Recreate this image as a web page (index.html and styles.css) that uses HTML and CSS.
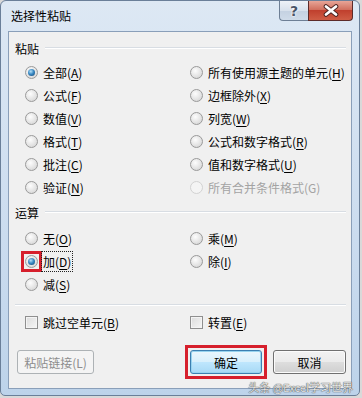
FILE: index.html
```html
<!DOCTYPE html>
<html lang="zh-CN">
<head>
    <meta charset="UTF-8">
    <title>选择性粘贴</title>
    <link rel="stylesheet" href="styles.css">
</head>
<body>
    <div class="window">
        <div class="titlebar">
            <span class="title">选择性粘贴</span>
            <div class="caption">
                <div class="cap help">?</div>
                <div class="cap close">
                    <svg width="18" height="13" viewBox="0 0 18 13">
                        <path d="M4 2.5 L14 10.5 M14 2.5 L4 10.5" stroke="#4a2320" stroke-width="4.6" stroke-linecap="round"/>
                        <path d="M4 2.5 L14 10.5 M14 2.5 L4 10.5" stroke="#fff" stroke-width="2.8" stroke-linecap="round"/>
                    </svg>
                </div>
            </div>
        </div>

        <div class="client">
            <div class="group-head">粘贴</div>
            <div class="options">
                <div class="opt"><span class="radio on"></span>全部(<u>A</u>)</div>
                <div class="opt"><span class="radio"></span>所有使用源主题的单元(<u>H</u>)</div>
                <div class="opt"><span class="radio"></span>公式(<u>F</u>)</div>
                <div class="opt"><span class="radio"></span>边框除外(<u>X</u>)</div>
                <div class="opt"><span class="radio"></span>数值(<u>V</u>)</div>
                <div class="opt"><span class="radio"></span>列宽(<u>W</u>)</div>
                <div class="opt"><span class="radio"></span>格式(<u>T</u>)</div>
                <div class="opt"><span class="radio"></span>公式和数字格式(<u>R</u>)</div>
                <div class="opt"><span class="radio"></span>批注(<u>C</u>)</div>
                <div class="opt"><span class="radio"></span>值和数字格式(<u>U</u>)</div>
                <div class="opt"><span class="radio"></span>验证(<u>N</u>)</div>
                <div class="opt disabled"><span class="radio"></span>所有合并条件格式(G)</div>
            </div>

            <div class="group-head ops-head">运算</div>
            <div class="options ops">
                <div class="opt"><span class="radio"></span>无(<u>O</u>)</div>
                <div class="opt"><span class="radio"></span>乘(<u>M</u>)</div>
                <div class="opt"><span class="mark"><span class="radio on"></span></span><span class="focus">加(<u>D</u>)</span></div>
                <div class="opt"><span class="radio"></span>除(<u>I</u>)</div>
                <div class="opt"><span class="radio"></span>减(<u>S</u>)</div>
            </div>

            <div class="separator"></div>

            <div class="options checks">
                <div class="opt"><span class="check"></span>跳过空单元(<u>B</u>)</div>
                <div class="opt"><span class="check"></span>转置(<u>E</u>)</div>
            </div>

            <div class="buttons">
                <button class="btn link" disabled>粘贴链接(L)</button>
                <div class="right-buttons">
                    <div class="mark-btn"><button class="btn default">确定</button></div>
                    <button class="btn">取消</button>
                </div>
            </div>
        </div>

        <div class="watermark">头条 @Excel学习世界</div>
    </div>
</body>
</html>
```

FILE: styles.css
```css
body {
    margin: 0;
    background: #d9d9d9;
    font-family: "Noto Sans CJK SC", "Noto Sans", sans-serif;
    font-size: 12px;
    color: #000;
}
.window {
    position: relative;
    width: 360px;
    height: 396px;
    border: 1px solid #6a7f99;
    border-radius: 6px 6px 5px 5px;
    background: linear-gradient(#dde8f4, #cbdcef 60%, #bdd3ea);
    box-sizing: border-box;
    padding: 0 7px 7px 7px;
}
.titlebar {
    height: 30px;
    display: flex;
    justify-content: space-between;
    align-items: flex-start;
}
.title {
    margin-top: 7px;
    margin-left: 3px;
    line-height: 16px;
}
.caption {
    display: flex;
    margin-right: -1px;
}
.cap {
    height: 20px;
    box-sizing: border-box;
    display: flex;
    align-items: center;
    justify-content: center;
}
.help {
    width: 29px;
    border: 1px solid #6e7f95;
    border-top: none;
    border-right: none;
    border-radius: 0 0 0 4px;
    background: linear-gradient(#eef2f7, #d8e1ec 50%, #c4d1e1 51%, #cfdbe9);
    color: #4a5568;
    font-weight: bold;
    font-size: 14px;
    font-family: "DejaVu Sans", sans-serif;
    text-shadow: 0 0 2px #fff, 0 0 2px #fff, 0 0 1px #fff;
}
.close {
    width: 45px;
    border: 1px solid #5c2b29;
    border-top: none;
    border-radius: 0 0 4px 0;
    background: linear-gradient(#e7a597, #d1705f 45%, #c0402e 50%, #cf5d45);
}
.client {
    border: 1px solid #8a9fb9;
    background: #f0f0f0;
    height: 358px;
    box-sizing: border-box;
    padding-top: 8px;
}
.group-head {
    display: flex;
    align-items: center;
    height: 16px;
    padding: 0 5px 0 6px;
}
.group-head::after {
    content: "";
    flex: 1;
    height: 1px;
    background: #d8dde3;
    margin-left: 6px;
    border-bottom: 1px solid #fff;
}
.options {
    display: grid;
    grid-template-columns: 165px 1fr;
    grid-auto-rows: 23px;
    padding-left: 16px;
    margin-top: 5px;
}
.opt {
    display: flex;
    align-items: center;
    white-space: nowrap;
}
.opt u {
    text-decoration-thickness: 1px;
    text-underline-offset: 2px;
}
.disabled {
    color: #a3a3a3;
}
.radio {
    width: 11px;
    height: 11px;
    border: 1px solid #9a9a9a;
    border-radius: 50%;
    background: radial-gradient(circle at 40% 35%, #fdfdfd, #e4e4e4 55%, #cfcfcf);
    margin-right: 5px;
    position: relative;
    flex: none;
}
.disabled .radio {
    border-color: #d2d2d2;
    background: #f4f4f4;
}
.radio.on::after {
    content: "";
    position: absolute;
    left: 2px;
    top: 2px;
    width: 7px;
    height: 7px;
    border-radius: 50%;
    background: radial-gradient(circle at 40% 35%, #b6e0f8, #3a8ac4 45%, #0f3f6e);
}
.mark {
    display: flex;
    outline: 3px solid #d61f2c;
    outline-offset: 1px;
    margin-right: 5px;
}
.mark .radio {
    margin-right: 0;
}
.focus {
    outline: 1px dotted #222;
    outline-offset: 1px;
}
.ops-head {
    margin-top: 5px;
}
.ops {
    margin-top: 7px;
}
.separator {
    height: 1px;
    background: #d8dde3;
    border-bottom: 1px solid #fff;
    margin: 8px 5px 0 6px;
}
.checks {
    margin-top: 5px;
}
.check {
    width: 11px;
    height: 11px;
    border: 1px solid #8f8f8f;
    background: linear-gradient(135deg, #dcdcdc, #f6f6f6);
    box-shadow: inset 0 0 0 1px #f4f4f4;
    margin-right: 5px;
    flex: none;
}
.buttons {
    display: flex;
    justify-content: space-between;
    margin-top: 16px;
    padding: 0 5px 0 8px;
}
.right-buttons {
    display: flex;
    gap: 11px;
}
.btn {
    height: 24px;
    width: 73px;
    border: 1px solid #707070;
    border-radius: 3px;
    background: linear-gradient(#f2f2f2, #ebebeb 48%, #dddddd 52%, #cfcfcf);
    box-shadow: inset 0 0 0 1px #fbfbfb;
    font-family: "Noto Sans CJK SC", "Noto Sans", sans-serif;
    font-size: 12px;
    color: #000;
    padding: 0;
    display: block;
}
.link {
    width: 77px;
    border-color: #adb2b5;
    background: #f4f4f4;
    box-shadow: none;
    color: #8d8d8d;
}
.mark-btn {
    outline: 3px solid #d61f2c;
    outline-offset: 2px;
}
.default {
    width: 72px;
    border-color: #3c7fb1;
    box-shadow: inset 0 0 0 1px #97d3ef;
    background: linear-gradient(#eaf6fd, #d9f0fc 48%, #bee6fd 52%, #a7d9f5);
}
.watermark {
    position: absolute;
    right: 6px;
    bottom: 0px;
    font-size: 11px;
    color: #e6e6e6;
    text-shadow: 0 0 1px #444, 0 0 1px #444;
}
```
